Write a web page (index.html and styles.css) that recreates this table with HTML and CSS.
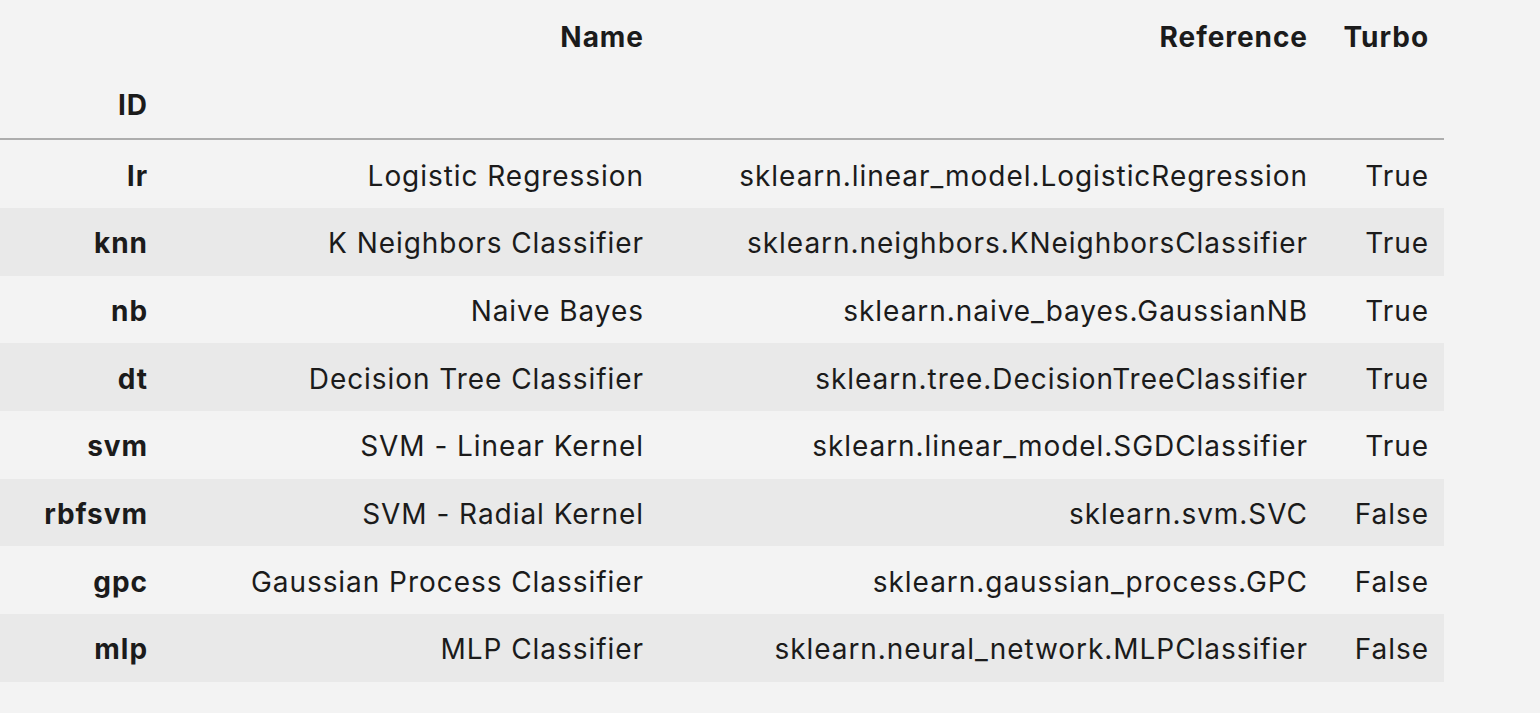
FILE: index.html
```html
<!DOCTYPE html>
<html lang="en">
<head>
<meta charset="utf-8">
<title>Classification models</title>
<link rel="stylesheet" href="styles.css">
</head>
<body>
<table class="dataframe">
  <colgroup>
    <col class="col-id">
    <col class="col-name">
    <col class="col-ref">
    <col class="col-turbo">
  </colgroup>
  <thead>
    <tr class="head-cols">
      <th></th>
      <th>Name</th>
      <th>Reference</th>
      <th>Turbo</th>
    </tr>
    <tr class="head-index">
      <th>ID</th>
      <th></th>
      <th></th>
      <th></th>
    </tr>
  </thead>
  <tbody>
    <tr><th>lr</th><td>Logistic Regression</td><td>sklearn.linear_model.LogisticRegression</td><td>True</td></tr>
    <tr><th>knn</th><td>K Neighbors Classifier</td><td>sklearn.neighbors.KNeighborsClassifier</td><td>True</td></tr>
    <tr><th>nb</th><td>Naive Bayes</td><td>sklearn.naive_bayes.GaussianNB</td><td>True</td></tr>
    <tr><th>dt</th><td>Decision Tree Classifier</td><td>sklearn.tree.DecisionTreeClassifier</td><td>True</td></tr>
    <tr><th>svm</th><td>SVM - Linear Kernel</td><td>sklearn.linear_model.SGDClassifier</td><td>True</td></tr>
    <tr><th>rbfsvm</th><td>SVM - Radial Kernel</td><td>sklearn.svm.SVC</td><td>False</td></tr>
    <tr><th>gpc</th><td>Gaussian Process Classifier</td><td>sklearn.gaussian_process.GPC</td><td>False</td></tr>
    <tr><th>mlp</th><td>MLP Classifier</td><td>sklearn.neural_network.MLPClassifier</td><td>False</td></tr>
  </tbody>
</table>
</body>
</html>
```

FILE: styles.css
```css
html, body {
  margin: 0;
  padding: 0;
  background: #f3f3f3;
}

body {
  font-family: Inter, "Liberation Sans", Arial, sans-serif;
  color: #1b1b1b;
}

.dataframe {
  margin-top: 2px;
  width: 1444px;
  table-layout: fixed;
  border-collapse: collapse;
  border-spacing: 0;
  font-size: 28px;
  letter-spacing: 0.95px;
}

.col-id { width: 163px; }
.col-name { width: 496px; }
.col-ref { width: 664px; }
.col-turbo { width: 121px; }

.dataframe th,
.dataframe td {
  height: 67.7px;
  padding: 0 15px 0 0;
  text-align: right;
  vertical-align: middle;
  white-space: nowrap;
  box-sizing: border-box;
}

.dataframe th {
  font-weight: 700;
}

.dataframe td {
  font-weight: 400;
}

.dataframe thead th {
  height: 68.5px;
  padding-top: 2px;
}

.dataframe thead {
  border-bottom: 2px solid #adadad;
}

.dataframe tbody th,
.dataframe tbody td {
  padding-top: 3px;
}

.dataframe tbody tr:first-child th,
.dataframe tbody tr:first-child td {
  height: 69px;
}

.dataframe tbody tr:nth-child(even) {
  background: #e9e9e9;
}
```
